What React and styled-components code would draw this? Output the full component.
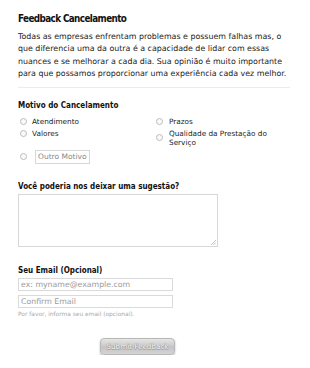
import React from 'react';
import styled, { createGlobalStyle } from 'styled-components';

const GlobalStyle = createGlobalStyle`
  body {
    margin: 0;
    background: #fff;
    font-family: "DejaVu Sans", Verdana, sans-serif;
    color: #111;
  }
`

const Pagina = styled.div`
  padding: 12px 16px 0 18px;
`

const Titulo = styled.h1`
  margin: 0 0 6px;
  font-family: "DejaVu Sans Condensed", "DejaVu Sans", sans-serif;
  font-stretch: condensed;
  font-size: 9.8px;
  letter-spacing: -0.6px;
  font-weight: bold;
  line-height: 13px;
`

const Intro = styled.p`
  margin: 0;
  font-size: 7.9px;
  line-height: 12.4px;
  color: #222;
`

const Divisor = styled.hr`
  border: 0;
  border-top: 1px solid #ececec;
  margin: 6px 4px 13px 0;
`

const Rotulo = styled.div`
  font-family: "DejaVu Sans Condensed", "DejaVu Sans", sans-serif;
  font-stretch: condensed;
  font-size: 8px;
  font-weight: bold;
  line-height: 10px;
  margin-bottom: ${p => p.espaco || 2}px;
`

const Grade = styled.div`
  display: grid;
  grid-template-columns: 136px 1fr;
  row-gap: 3px;
  align-items: start;
`

const Opcao = styled.label`
  display: flex;
  align-items: center;
  gap: ${p => p.folga || 5}px;
  font-size: 7.3px;
  line-height: 9px;
  color: #222;
`

const Radio = styled.span`
  width: 5px;
  height: 5px;
  border-radius: 50%;
  border: 1px solid #bbb;
  background: #fafafa;
  flex-shrink: 0;
  margin-left: 2px;
`

const OutroLinha = styled.div`
  display: flex;
  align-items: center;
  gap: 8px;
  margin-top: 3px;
`

const CaixaPequena = styled.div`
  border: 1px solid #d8d8d8;
  font-size: 7.5px;
  color: #888;
  padding: 1px 2px;
  line-height: 10px;
`

const Secao = styled.div`
  margin-top: ${p => p.topo}px;
`

const AreaTexto = styled.div`
  width: 198px;
  height: 51px;
  border: 1px solid #d8d8d8;
  position: relative;
`

const Alca = styled.svg`
  position: absolute;
  right: 1px;
  bottom: 1px;
`

const Campo = styled.div`
  width: 151px;
  height: 11px;
  border: 1px solid #dadada;
  font-size: 7.8px;
  line-height: 11px;
  color: #9a9a9a;
  padding-left: 2px;
  margin-bottom: 4px;
`

const Dica = styled.div`
  font-size: 5.9px;
  line-height: 8px;
  color: #aaa;
  margin-top: -2px;
`

const BotaoLinha = styled.div`
  display: flex;
  margin-top: 20px;
  padding-left: 82px;
`

const Botao = styled.button`
  width: 75px;
  height: 17px;
  border-radius: 4px;
  border: 1px solid #b8b8b8;
  background: linear-gradient(#e6e6e6, #c4c4c4 55%, #d4d4d4);
  box-shadow: 0 1px 2px rgba(0,0,0,0.3);
  color: #f6f6f6;
  font-family: "DejaVu Sans", sans-serif;
  font-size: 7.2px;
  padding: 0;
  text-shadow: 0 0.5px 0 #9c9c9c, 0 -0.5px 0 #9c9c9c, 0.5px 0 0 #9c9c9c, -0.5px 0 0 #9c9c9c;
`

class App extends React.Component {
  render() {
    return (
      <Pagina>
        <GlobalStyle />
        <Titulo>Feedback Cancelamento</Titulo>
        <Intro>
          Todas as empresas enfrentam problemas e possuem falhas mas, o que diferencia uma da outra é a capacidade de lidar com essas nuances e se melhorar a cada dia. Sua opinião é muito importante para que possamos proporcionar uma experiência cada vez melhor.
        </Intro>
        <Divisor />

        <Rotulo espaco={6}>Motivo do Cancelamento</Rotulo>
        <Grade>
          <Opcao><Radio />Atendimento</Opcao>
          <Opcao folga={6}><Radio />Prazos</Opcao>
          <Opcao><Radio />Valores</Opcao>
          <Opcao folga={6}><Radio />Qualidade da Prestação do<br />Serviço</Opcao>
        </Grade>
        <OutroLinha>
          <Radio />
          <CaixaPequena>Outro Motivo</CaixaPequena>
        </OutroLinha>

        <Secao topo={18}>
          <Rotulo>Você poderia nos deixar uma sugestão?</Rotulo>
          <AreaTexto>
            <Alca width="5" height="5" viewBox="0 0 5 5">
              <path d="M5 0 L0 5 M5 2.5 L2.5 5" stroke="#aaa" strokeWidth="0.7" />
            </Alca>
          </AreaTexto>
        </Secao>

        <Secao topo={19}>
          <Rotulo>Seu Email (Opcional)</Rotulo>
          <Campo>ex: myname@example.com</Campo>
          <Campo>Confirm Email</Campo>
          <Dica>Por favor, informa seu email (opcional).</Dica>
        </Secao>

        <BotaoLinha>
          <Botao>Submit Feedback</Botao>
        </BotaoLinha>
      </Pagina>
    );
  }
}

export default App;
